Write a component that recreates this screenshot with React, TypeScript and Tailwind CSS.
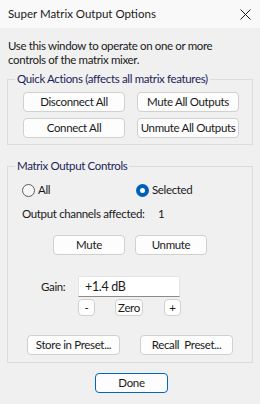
import React, { useState } from 'react'

function Btn({ label, className = '' }: { label: string; className?: string }) {
  return (
    <button
      type="button"
      className={`flex items-center justify-center whitespace-pre rounded-[4px] border border-[#d0d0d0] bg-[#fdfdfd] text-[11.5px] leading-none text-[#1a1a1a] ${className}`}
    >
      {label}
    </button>
  )
}

function Radio({ checked, label, onClick }: { checked: boolean; label: string; onClick: () => void }) {
  return (
    <div className="flex items-center gap-[3px]" onClick={onClick}>
      {checked ? (
        <span className="flex h-[13px] w-[13px] items-center justify-center rounded-full bg-[#005fb8]">
          <span className="h-[5px] w-[5px] rounded-full bg-white" />
        </span>
      ) : (
        <span className="h-[13px] w-[13px] rounded-full border border-[#5c5c5c] bg-[#f7f7f7]" />
      )}
      <span>{label}</span>
    </div>
  )
}

export default function App() {
  const [scope, setScope] = useState<'all' | 'selected'>('selected')

  return (
    <div
      className="flex h-[404px] w-[260px] flex-col overflow-hidden whitespace-nowrap bg-[#f0f0f0] text-[11.5px] leading-[14px] tracking-[-0.35px] text-[#1a1a1a]"
      style={{ fontFamily: '"Segoe UI", Lato, "Liberation Sans", Arial, sans-serif' }}
    >
      {/* title bar */}
      <div className="flex h-[28px] shrink-0 items-center justify-between bg-[#f9f9f9] pl-[8px] pr-[8px]">
        <span className="text-[11.5px] tracking-normal">Super Matrix Output Options</span>
        <svg width="11" height="11" viewBox="0 0 11 11" className="mr-[1px]">
          <path d="M0.5 0.5 L10.5 10.5 M10.5 0.5 L0.5 10.5" stroke="#1a1a1a" strokeWidth="1" />
        </svg>
      </div>

      <p className="mt-[11px] px-[8px]">
        Use this window to operate on one or more
        <br />
        controls of the matrix mixer.
      </p>

      <fieldset className="mx-[7px] mt-[5px] min-w-0 border border-[#dcdcdc] pb-[6px]">
        <legend className="ml-[7px] px-[2px] text-[#1b2456]">Quick Actions (affects all matrix features)</legend>
        <div className="ml-[15px] mt-[6px] grid grid-cols-[102px_102px] gap-x-[12px] gap-y-[6px]">
          <Btn label="Disconnect All" className="h-[20px]" />
          <Btn label="Mute All Outputs" className="h-[20px]" />
          <Btn label="Connect All" className="h-[20px]" />
          <Btn label="Unmute All Outputs" className="h-[20px]" />
        </div>
      </fieldset>

      <fieldset className="mx-[7px] mt-[14px] min-w-0 border border-[#dcdcdc] pb-[7px]">
        <legend className="ml-[7px] px-[2px] text-[#1b2456]">Matrix Output Controls</legend>

        <div className="mt-[10px] flex pl-[14px]">
          <div className="w-[114px]">
            <Radio checked={scope === 'all'} label="All" onClick={() => setScope('all')} />
          </div>
          <Radio checked={scope === 'selected'} label="Selected" onClick={() => setScope('selected')} />
        </div>

        <div className="mt-[10px] flex pl-[14px]">
          <span className="w-[136px] shrink-0">Output channels affected:</span>
          <span>1</span>
        </div>

        <div className="mt-[14px] flex gap-[10px] pl-[45px]">
          <Btn label="Mute" className="h-[20px] w-[72px]" />
          <Btn label="Unmute" className="h-[20px] w-[72px]" />
        </div>

        <div className="mt-[21px] flex items-center pl-[33px]">
          <span className="w-[37px]">Gain:</span>
          <div className="flex h-[21px] w-[102px] items-center border border-[#e5e5e5] border-b-[#8a8a8a] bg-white pl-[6px] text-[12.5px]">
            +1.4 dB
          </div>
        </div>

        <div className="mt-[2px] flex pl-[70px]">
          <Btn label="-" className="h-[17px] w-[17px]" />
          <Btn label="Zero" className="ml-[20px] h-[17px] w-[28px]" />
          <Btn label="+" className="ml-[21px] h-[17px] w-[17px]" />
        </div>

        <div className="mt-[19px] flex gap-[20px] pl-[19px]">
          <Btn label="Store in Preset..." className="h-[20px] w-[93px]" />
          <Btn label="Recall  Preset..." className="h-[20px] w-[93px]" />
        </div>
      </fieldset>

      <div className="mt-[10px] flex justify-center pl-[3px]">
        <button
          type="button"
          className="flex h-[20px] w-[73px] items-center justify-center rounded-[4px] border border-[#0067c0] bg-[#fdfdfd] text-[11.5px]"
        >
          Done
        </button>
      </div>
    </div>
  )
}
